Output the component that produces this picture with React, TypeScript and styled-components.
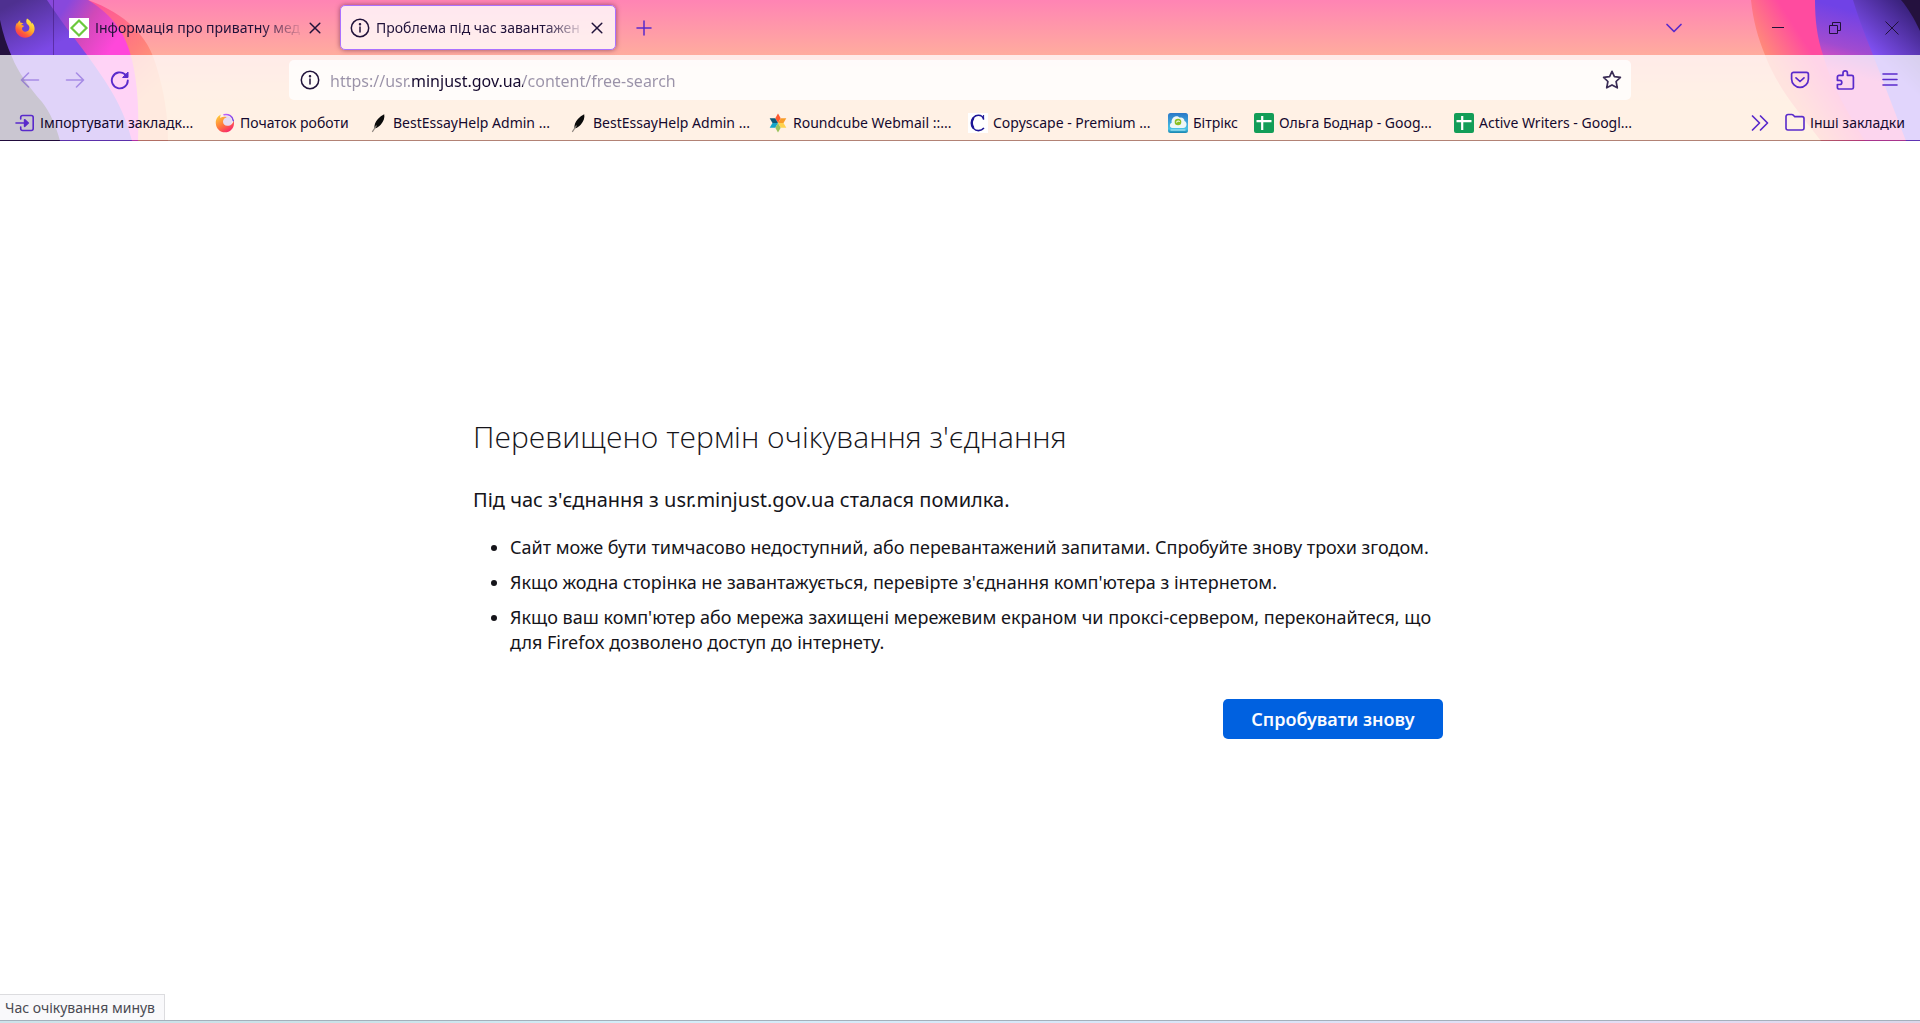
import React from 'react';
import styled, { createGlobalStyle, css } from 'styled-components';

const accent = '#592acb';
const ink = '#20123a';

const GlobalStyle = createGlobalStyle`
  *, *::before, *::after { box-sizing: border-box; }
  body { margin: 0; background: #fff; font-family: "Noto Sans", "Open Sans", sans-serif; }
  button, input { font: inherit; }
`;

const Window = styled.div`
  display: flex;
  flex-direction: column;
  min-height: 100vh;
`;

/* ---------- browser chrome ---------- */

const Chrome = styled.header`
  position: relative;
  isolation: isolate;
  background: linear-gradient(#ff84b4 0, #ffac9e 55px, #ffc593 105px);
  color: ${ink};
  font-size: 14px;
  line-height: 20px;
`;

const ThemeArt = styled.svg<{ $side: 'left' | 'right' }>`
  position: absolute;
  z-index: -1;
  top: 0;
  ${p => (p.$side === 'left' ? 'left: 0;' : 'right: 0;')}
`;

const TabStrip = styled.div`
  display: flex;
  align-items: center;
  height: 55px;
`;

const HomeTab = styled.button`
  display: grid;
  place-items: center;
  width: 54px;
  height: 55px;
  padding: 0 4px 0 0;
  border: 0;
  border-right: 1px solid rgba(60, 20, 110, 0.5);
  background: none;
`;

const Tabs = styled.div`
  display: flex;
  gap: 5px;
  margin-left: 5px;
`;

const Tab = styled.div<{ $active?: boolean }>`
  display: flex;
  align-items: center;
  gap: 6px;
  width: 276px;
  height: 45px;
  padding: 0 10px;
  border-radius: 5px;
  ${p =>
    p.$active &&
    css`
      padding: 0 8px 0 9px;
      border: 1px solid #ab71ff;
      background: rgba(255, 255, 255, 0.8);
      box-shadow: 0 0 5px rgba(70, 10, 50, 0.55);
    `}
`;

const TabTitle = styled.span`
  flex: 1;
  min-width: 0;
  overflow: hidden;
  white-space: nowrap;
  mask-image: linear-gradient(to left, transparent, #000 44px);
`;

const IconButton = styled.button<{ $w?: number; $h?: number; $tone?: string; $dim?: boolean }>`
  display: grid;
  place-items: center;
  flex: none;
  width: ${p => p.$w || 45}px;
  height: ${p => p.$h || 40}px;
  padding: 0;
  border: 0;
  background: none;
  color: ${p => p.$tone || accent};
  opacity: ${p => (p.$dim ? 0.42 : 1)};
`;

const TabClose = styled(IconButton)`
  margin-left: -6px;
`;

const NewTab = styled(IconButton)`
  margin-left: 5px;
`;

const WindowControls = styled.div`
  display: flex;
  margin-left: auto;
`;

const ListTabs = styled(IconButton)`
  margin-right: 53px;
`;

const Toolbars = styled.div`
  border-bottom: 1px solid rgba(30, 0, 60, 0.34);
  background-color: rgba(255, 255, 255, 0.76);
  background-clip: padding-box;
`;

const NavBar = styled.nav`
  display: grid;
  grid-template-columns: 289px minmax(0, 1fr) 289px;
  align-items: center;
  height: 50px;
`;

const NavGroup = styled.div<{ $end?: boolean }>`
  display: flex;
  padding: 0 8px 0 7px;
  justify-content: ${p => (p.$end ? 'flex-end' : 'flex-start')};
`;

const UrlBar = styled.div`
  display: flex;
  align-items: center;
  height: 40px;
  border-radius: 5px;
  background: rgba(255, 255, 255, 0.8);
`;

/* The registrable domain is dark, the rest of the address is muted. */
const UrlInput = styled.input`
  flex: 1;
  min-width: 0;
  height: 36px;
  padding: 2px 0 0;
  border: 0;
  outline: 0;
  font-size: 16px;
  color: transparent;
  caret-color: ${ink};
  background: linear-gradient(to right, #9a92a8 81px, #15092e 81px 193px, #9a92a8 193px);
  -webkit-background-clip: text;
  background-clip: text;
`;

const BookmarksBar = styled.div`
  display: flex;
  align-items: center;
  height: 35px;
  padding: 0 15px;
`;

const Bookmark = styled.a<{ $w?: number }>`
  display: flex;
  align-items: center;
  gap: 5px;
  flex: none;
  width: ${p => (p.$w ? `${p.$w}px` : 'auto')};
  color: #15092e;
  text-decoration: none;
  white-space: nowrap;
  svg { flex: none; }
`;

const BookmarksEnd = styled.div`
  display: flex;
  align-items: center;
  margin-left: auto;
`;

/* ---------- page ---------- */

const Main = styled.main`
  flex: 1;
  display: flex;
  flex-direction: column;
  align-items: center;
  justify-content: center;
  padding: 0 4px 6px 0;
  color: #15141a;
`;

const ErrorPanel = styled.section`
  width: 970px;
  max-width: 100%;
`;

const Title = styled.h1`
  margin: 0 0 27px;
  font: 300 30px/42px "Open Sans", "Noto Sans", sans-serif;
`;

const Subtitle = styled.h2`
  margin: 0 0 20px;
  font-size: 20px;
  font-weight: 400;
  line-height: 30px;
`;

const Reasons = styled.ul`
  margin: 0 0 44px;
  padding: 0 0 0 37px;
  font-size: 18px;
  line-height: 25px;
  li + li { margin-top: 10px; }
`;

const Actions = styled.div`
  display: flex;
  justify-content: flex-end;
`;

const RetryButton = styled.button`
  width: 220px;
  height: 40px;
  padding: 0;
  border: 0;
  border-radius: 5px;
  background: #0061e0;
  color: #fbfbfe;
  font-size: 18px;
  font-weight: 600;
`;

const Footer = styled.footer`
  position: relative;
  height: 3px;
  border-top: 1px solid #a5b0bb;
  background: linear-gradient(to right, #cde3ea, #c9e2e8 18%, #d3eef9 33%, #d8e6f8 60%, #e4dcf4 86%, #dcd6ea);
`;

const StatusTip = styled.div`
  position: absolute;
  left: 0;
  bottom: 3px;
  height: 26px;
  padding: 3px 9px 0 5px;
  border: solid #dcdcdf;
  border-width: 1px 1px 0 0;
  background: #f9f9fb;
  color: #4a4a52;
  font-size: 14px;
  line-height: 20px;
  white-space: nowrap;
`;

/* ---------- icons ---------- */

const Stroke = ({ size = 20, box = 20, w = 1.6, children }: { size?: number; box?: number; w?: number; children: React.ReactNode }) => (
  <svg width={size} height={size} viewBox={`0 0 ${box} ${box}`} fill="none" stroke="currentColor" strokeWidth={w} strokeLinecap="round" strokeLinejoin="round" aria-hidden="true">
    {children}
  </svg>
);

const CloseIcon = () => <Stroke w={1.5}><path d="M5.2 5.2l9.6 9.6M14.8 5.2l-9.6 9.6" /></Stroke>;

const InfoIcon = () => (
  <Stroke w={1.5}>
    <circle cx="10" cy="10" r="8.7" />
    <path d="M10 9v5" />
    <circle cx="10" cy="6.2" r=".5" fill="currentColor" />
  </Stroke>
);

const FirefoxLogo = () => (
  <svg width="20" height="20" viewBox="0 0 20 20" aria-hidden="true">
    <defs>
      <linearGradient id="fxFlame" x1=".85" y1=".05" x2=".25" y2="1">
        <stop offset="0" stopColor="#fff44f" />
        <stop offset=".45" stopColor="#ffb02a" />
        <stop offset=".75" stopColor="#ff5a38" />
        <stop offset="1" stopColor="#f0306c" />
      </linearGradient>
    </defs>
    <circle cx="10" cy="10.500" r="6" fill="#6a3fd8" />
    <path
      fill="url(#fxFlame)"
      d="M12 .4c3.500 2 4.500 4.300 4.800 5.600.2-.5.1-1.300-.1-1.800 2 1.700 3 4.300 2.900 6.900C19.300 16 15.300 19.700 10.200 19.700 5 19.700.6 15.800.4 10.500.3 8.200 1 6 2.300 4.500c0 .5 0 .9.2 1.200C3 4 4.300 2.700 5.200 2.300c-.2.900-.1 1.900.3 2.500 1.200-.2 2.200.1 3 .7-1.300.3-2 .9-2.200 1.600.8.400 2 .2 2.500.8.300.600-1 1-1.600 1.600-.8 2.600 1.300 4.300 3.400 4.200 2.500-.1 4-2 3.800-4.200-.1-1.400-.9-2.300-1.800-2.900C10.800 4.800 10.900 2 12 .4z"
    />
  </svg>
);

const FirefoxSwirl = () => (
  <svg width="20" height="20" viewBox="0 0 20 20" aria-hidden="true">
    <defs>
      <linearGradient id="swirl" x1=".1" y1=".1" x2=".7" y2="1">
        <stop offset="0" stopColor="#ffc83a" />
        <stop offset=".5" stopColor="#ff7a3c" />
        <stop offset="1" stopColor="#f8246c" />
      </linearGradient>
      <linearGradient id="swirlTail" x1="0" y1="0" x2="1" y2="1">
        <stop offset="0" stopColor="#c060ff" />
        <stop offset="1" stopColor="#6a3fe0" />
      </linearGradient>
    </defs>
    <circle cx="11.500" cy="8.500" r="5.500" fill="#e6dcf2" />
    <path fill="url(#swirl)" d="M6 1.600C2.500 3.200.6 6.500.8 10.400 1.100 15.500 5 19.300 10 19.300c4.900 0 8.900-3.800 9-8.900.1-1.200-.1-2.200-.5-3.200-.3 3.300-2.900 5.800-6.200 5.600C9.600 12.600 8 11 8 8.700c0-2.300 1.600-3.900 3.700-4.500C9 3.400 7 3.800 5.300 5.100 5 3.900 5.300 2.600 6 1.600z" />
    <path fill="none" stroke="url(#swirlTail)" strokeWidth="1.500" strokeLinecap="round" d="M9 1.700c4.500-1 8.900 1.600 9.300 6" />
  </svg>
);

const DiamondFavicon = () => (
  <svg width="20" height="20" viewBox="0 0 20 20" aria-hidden="true">
    <path fill="#fff" d="M0 0h20v20H0z" />
    <path d="M10 2.500l7.500 7.500-7.500 7.500L2.500 10z" fill="none" stroke="#6bc93c" strokeWidth="2.200" />
  </svg>
);

const FeatherFavicon = () => (
  <svg width="20" height="20" viewBox="0 0 20 20" aria-hidden="true">
    <path d="M16.200 1.300c.8 3.200-.6 7.200-3.300 10.300-1.500 1.700-3.500 3.300-5.400 3.700l-1-.3c-.6-2.500 1-6.300 3.200-8.700 2-2.300 4.300-4 6.500-5z" fill="#0b0b0b" />
    <path d="M8.500 12.500L4.300 18.800" stroke="#8f8780" strokeWidth="1.200" />
  </svg>
);

const petals = ['#ff5a30', '#f99b28', '#ffd24d', '#9cc45c', '#14a5c8', '#0d5a78'];
const RoundcubeFavicon = () => (
  <svg width="20" height="20" viewBox="0 0 20 20" aria-hidden="true">
    {petals.map((c, i) => (
      <path key={c} d="M10 10L7.300 5.200 10 .4l2.700 4.800z" fill={c} transform={`rotate(${i * 60} 10 10)`} />
    ))}
  </svg>
);

const CopyscapeFavicon = () => (
  <svg width="20" height="20" viewBox="0 0 20 20" aria-hidden="true">
    <path fill="#fff" d="M0 0h20v20H0z" />
    <path d="M15.600 6.300C15 3.500 13 2.200 10.300 2.200 6.600 2.200 4 5.400 4 9.900c0 4.500 2.500 7.700 6.400 7.700 2.400 0 4.200-.9 5.500-2.700" fill="none" stroke="#1c1496" strokeWidth="1.600" />
    <path d="M5.400 4.800C3.300 8 3.400 12 5.400 15.200" fill="none" stroke="#1c1496" strokeWidth="2.400" />
    <path d="M15.600 2v4.600" stroke="#1c1496" strokeWidth="1" />
  </svg>
);

const BitrixFavicon = () => (
  <svg width="20" height="20" viewBox="0 0 20 20" aria-hidden="true">
    <defs>
      <linearGradient id="bx" x1="0" y1="0" x2="0" y2="1">
        <stop offset="0" stopColor="#2a78c8" />
        <stop offset=".8" stopColor="#49c3e6" />
        <stop offset="1" stopColor="#1883ae" />
      </linearGradient>
    </defs>
    <rect width="20" height="20" rx="2.500" fill="url(#bx)" />
    <path d="M4.500 15C2.500 15 1.500 13.300 2 11.700c.2-1 .9-1.600 1.700-1.900C3 6.500 5.300 3.500 8 3.200c1.700-.2 3 .5 3.900 1.600 2-.7 4.400.6 4.600 3.200 1.400.6 2.200 2 2 3.700-.2 2-1.500 3.300-3.300 3.300z" fill="#eef6f6" />
    <circle cx="10" cy="9" r="3.300" fill="#8bbf22" />
    <path d="M8.500 9.500c.5-1.700 2.200-2 3.200-.9" fill="none" stroke="#fff" strokeWidth="1.100" />
    <path d="M2.500 17h15" stroke="#a8e8f4" strokeWidth="1.200" />
  </svg>
);

const SheetsFavicon = () => (
  <svg width="20" height="20" viewBox="0 0 20 20" aria-hidden="true">
    <rect width="20" height="20" rx="2" fill="#129d58" />
    <path d="M8.200 3v14M2.500 8.200h15" stroke="#fff" strokeWidth="2.200" />
  </svg>
);

const bookmarks: { label: string; width: number; icon: React.ReactNode }[] = [
  {
    label: 'Імпортувати закладк...',
    width: 200,
    icon: (
      <svg width="20" height="20" viewBox="0 0 20 20" fill="none" stroke={accent} strokeWidth="1.600" strokeLinecap="round" strokeLinejoin="round" aria-hidden="true">
        <path d="M5.700 6V4.500a2 2 0 0 1 2-2h8.500a2 2 0 0 1 2 2v11a2 2 0 0 1-2 2H7.700a2 2 0 0 1-2-2V14M1 10h11" />
        <path d="M9.600 6.700l3.700 3.300-3.700 3.300z" fill={accent} />
      </svg>
    ),
  },
  { label: 'Початок роботи', width: 153, icon: <FirefoxSwirl /> },
  { label: 'BestEssayHelp Admin ...', width: 200, icon: <FeatherFavicon /> },
  { label: 'BestEssayHelp Admin ...', width: 200, icon: <FeatherFavicon /> },
  { label: 'Roundcube Webmail ::...', width: 200, icon: <RoundcubeFavicon /> },
  { label: 'Copyscape - Premium ...', width: 200, icon: <CopyscapeFavicon /> },
  { label: 'Бітрікс', width: 86, icon: <BitrixFavicon /> },
  { label: 'Ольга Боднар - Goog...', width: 200, icon: <SheetsFavicon /> },
  { label: 'Active Writers - Googl...', width: 200, icon: <SheetsFavicon /> },
];

const LeftArt = () => (
  <ThemeArt $side="left" width="172" height="141" viewBox="0 0 172 141" aria-hidden="true">
    <defs>
      <linearGradient id="l1" gradientUnits="userSpaceOnUse" x1="90" y1="0" x2="165" y2="80">
        <stop offset="0" stopColor="#ff4f9a" />
        <stop offset=".6" stopColor="#ff7f7c" />
        <stop offset="1" stopColor="#ffa878" />
      </linearGradient>
      <linearGradient id="l2" gradientUnits="userSpaceOnUse" x1="60" y1="15" x2="112" y2="48">
        <stop offset="0" stopColor="#8848dc" />
        <stop offset=".45" stopColor="#d049b8" />
        <stop offset="1" stopColor="#ff47da" />
      </linearGradient>
      <linearGradient id="l3" gradientUnits="userSpaceOnUse" x1="20" y1="0" x2="45" y2="50">
        <stop offset="0" stopColor="#4e3090" />
        <stop offset="1" stopColor="#7c49e6" />
      </linearGradient>
    </defs>
    <path fill="url(#l1)" d="M0 0h88c38 14 60 36 68 65 8 26 12 50 12 76H0z" />
    <path fill="url(#l2)" d="M0 0h88c26 16 38 34 44 60 6 25 7 52 6 81H0z" />
    <path fill="url(#l3)" d="M0 0h47c13 20 26 36 40 55 20 28 36 50 45 86H0z" />
    <path fill="#24113e" d="M0 20c3 14 7 26 12 37 6 15 17 30 30 45 8 10 14 24 18 39H0z" />
  </ThemeArt>
);

const RightArt = () => (
  <ThemeArt $side="right" width="170" height="141" viewBox="0 0 170 141" aria-hidden="true">
    <defs>
      <linearGradient id="r1" gradientUnits="userSpaceOnUse" x1="8" y1="44" x2="42" y2="22">
        <stop offset="0" stopColor="#ff8c78" />
        <stop offset="1" stopColor="#ff4b9f" />
      </linearGradient>
      <linearGradient id="r2" gradientUnits="userSpaceOnUse" x1="100" y1="10" x2="84" y2="70">
        <stop offset="0" stopColor="#7042e6" />
        <stop offset=".6" stopColor="#a04bd0" />
        <stop offset="1" stopColor="#f04fb8" />
      </linearGradient>
      <linearGradient id="r3" gradientUnits="userSpaceOnUse" x1="158" y1="10" x2="120" y2="50">
        <stop offset="0" stopColor="#3c2380" />
        <stop offset="1" stopColor="#8050f2" />
      </linearGradient>
    </defs>
    <path fill="url(#r1)" d="M1 0c2 20 7 38 14 55 12 32 33 56 56 86h99V0z" />
    <path fill="url(#r2)" d="M65 0c0 20 2 37 8 55 8 30 24 56 42 86h55V0z" />
    <path fill="url(#r3)" d="M103 0c6 20 13 37 20 55l33 86h14V0z" />
    <path fill="#24113e" d="M151 0c7 8 13 18 19 31V0z" />
  </ThemeArt>
);

export default function App() {
  return (
    <Window>
      <GlobalStyle />
      <Chrome>
        <LeftArt />
        <RightArt />
        <TabStrip>
          <HomeTab aria-label="Firefox"><FirefoxLogo /></HomeTab>
          <Tabs>
            <Tab>
              <DiamondFavicon />
              <TabTitle>Інформація про приватну мед</TabTitle>
              <TabClose $w={20} $h={20} $tone={ink} aria-label="Закрити вкладку"><CloseIcon /></TabClose>
            </Tab>
            <Tab $active>
              <InfoIcon />
              <TabTitle>Проблема під час завантажен</TabTitle>
              <TabClose $w={20} $h={20} $tone={ink} aria-label="Закрити вкладку"><CloseIcon /></TabClose>
            </Tab>
          </Tabs>
          <NewTab aria-label="Нова вкладка">
            <Stroke w={1.5}><path d="M10 3v14M3 10h14" /></Stroke>
          </NewTab>
          <WindowControls>
            <ListTabs aria-label="Усі вкладки">
              <Stroke w={1.7}><path d="M3 6.500l7 7 7-7" /></Stroke>
            </ListTabs>
            <IconButton $w={57} $tone={ink} aria-label="Згорнути">
              <svg width="12" height="12" aria-hidden="true"><path d="M0 5.500h12" stroke="currentColor" /></svg>
            </IconButton>
            <IconButton $w={57} $tone={ink} aria-label="Відновити">
              <svg width="12" height="12" fill="none" stroke="currentColor" aria-hidden="true">
                <path d="M.5 3.500h8v8h-8zM3.500 3V.5h8v8H9" />
              </svg>
            </IconButton>
            <IconButton $w={57} $tone={ink} aria-label="Закрити">
              <svg width="14" height="14" aria-hidden="true"><path d="M.5.500l13 13M13.500.500l-13 13" stroke="currentColor" /></svg>
            </IconButton>
          </WindowControls>
        </TabStrip>

        <Toolbars>
          <NavBar>
            <NavGroup>
              <IconButton $dim aria-label="Назад">
                <Stroke><path d="M18.500 10H2M8.500 3L1.500 10l7 7" /></Stroke>
              </IconButton>
              <IconButton $dim aria-label="Вперед">
                <Stroke><path d="M1.500 10H18M11.500 3l7 7-7 7" /></Stroke>
              </IconButton>
              <IconButton aria-label="Оновити">
                <Stroke w={1.9}>
                  <path d="M17.800 10.500A8 8 0 1 1 15 4.300l1.500 1.500" />
                  <path d="M18 2.500v5h-5z" fill="currentColor" strokeWidth="1" />
                </Stroke>
              </IconButton>
            </NavGroup>
            <UrlBar>
              <IconButton $w={41} $tone={ink} aria-label="Відомості про сайт"><InfoIcon /></IconButton>
              <UrlInput aria-label="Адреса" defaultValue="https://usr.minjust.gov.ua/content/free-search" spellCheck={false} />
              <IconButton $w={38} $tone="#3a2c55" aria-label="Додати до закладок">
                <Stroke w={1.7}>
                  <path d="M10 1.300l2.400 5.400 6 .700-4.300 4.100 1.200 6.300-5.300-2.900-5.300 2.900 1.200-6.300L1.600 7.400l6-.7z" />
                </Stroke>
              </IconButton>
            </UrlBar>
            <NavGroup $end>
              <IconButton aria-label="Зберегти до Pocket">
                <Stroke w={1.7}>
                  <path d="M3.600 2.300h12.800a2 2 0 0 1 2 2V9a8.400 8.400 0 0 1-16.800 0V4.300a2 2 0 0 1 2-2z" />
                  <path d="M6 7.800l4 3.700 4-3.700" />
                </Stroke>
              </IconButton>
              <IconButton aria-label="Розширення">
                <Stroke w={1.7}>
                  <path d="M8 5.300V3.100a2.200 2.200 0 0 1 4.400 0v2.200h4.400a1.600 1.600 0 0 1 1.600 1.600v10.500a1.600 1.600 0 0 1-1.600 1.600H4a1.600 1.600 0 0 1-1.600-1.600v-2.900h2.300a2.100 2.100 0 0 0 0-4.200H2.400V6.900A1.600 1.600 0 0 1 4 5.300z" />
                </Stroke>
              </IconButton>
              <IconButton aria-label="Меню">
                <Stroke w={1.6}><path d="M3 4h14M3 9.500h14M3 15h14" /></Stroke>
              </IconButton>
            </NavGroup>
          </NavBar>

          <BookmarksBar>
            {bookmarks.map((b, i) => (
              <Bookmark key={i} href="#" $w={b.width}>
                {b.icon}
                {b.label}
              </Bookmark>
            ))}
            <BookmarksEnd>
              <IconButton $w={50} $h={30} aria-label="Більше закладок">
                <Stroke w={1.7}><path d="M2.500 3l7 7-7 7M10.500 3l7 7-7 7" /></Stroke>
              </IconButton>
              <Bookmark href="#">
                <svg width="20" height="20" viewBox="0 0 20 20" fill="none" stroke={accent} strokeWidth="1.600" strokeLinejoin="round" aria-hidden="true">
                  <path d="M1 3.500a2 2 0 0 1 2-2h3.700a2 2 0 0 1 1.500.6l1.300 1.500H17a2 2 0 0 1 2 2V15a2 2 0 0 1-2 2H3a2 2 0 0 1-2-2z" />
                </svg>
                Інші закладки
              </Bookmark>
            </BookmarksEnd>
          </BookmarksBar>
        </Toolbars>
      </Chrome>

      <Main>
        <ErrorPanel>
          <Title>Перевищено термін очікування з'єднання</Title>
          <Subtitle>Під час з'єднання з usr.minjust.gov.ua сталася помилка.</Subtitle>
          <Reasons>
            <li>Сайт може бути тимчасово недоступний, або перевантажений запитами. Спробуйте знову трохи згодом.</li>
            <li>Якщо жодна сторінка не завантажується, перевірте з'єднання комп'ютера з інтернетом.</li>
            <li>Якщо ваш комп'ютер або мережа захищені мережевим екраном чи проксі-сервером, переконайтеся, що для Firefox дозволено доступ до інтернету.</li>
          </Reasons>
          <Actions>
            <RetryButton type="button">Спробувати знову</RetryButton>
          </Actions>
        </ErrorPanel>
      </Main>

      <Footer>
        <StatusTip role="status">Час очікування минув</StatusTip>
      </Footer>
    </Window>
  );
}
